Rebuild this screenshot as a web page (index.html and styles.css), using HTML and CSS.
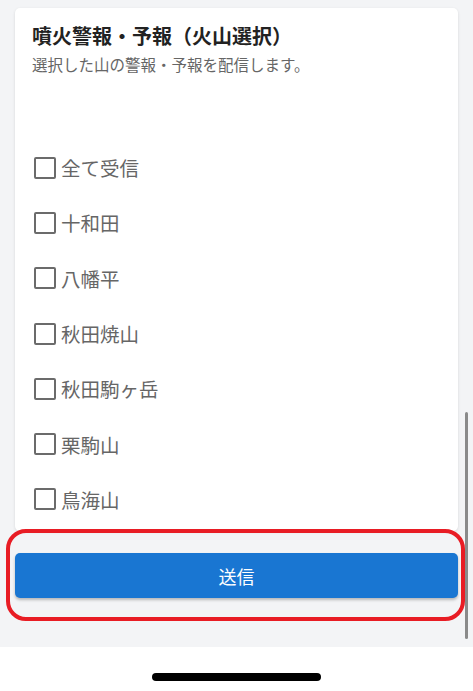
FILE: index.html
```html
<!DOCTYPE html>
<html lang="ja">
<head>
<meta charset="utf-8">
<link rel="stylesheet" href="styles.css">
</head>
<body>
<div class="screen">
  <div class="card">
    <h1 class="title">噴火警報・予報（火山選択）</h1>
    <p class="subtitle">選択した山の警報・予報を配信します。</p>
    <ul class="list">
      <li class="row"><span class="box"></span><span class="label">全て受信</span></li>
      <li class="row"><span class="box"></span><span class="label">十和田</span></li>
      <li class="row"><span class="box"></span><span class="label">八幡平</span></li>
      <li class="row"><span class="box"></span><span class="label">秋田焼山</span></li>
      <li class="row"><span class="box"></span><span class="label">秋田駒ヶ岳</span></li>
      <li class="row"><span class="box"></span><span class="label">栗駒山</span></li>
      <li class="row"><span class="box"></span><span class="label">鳥海山</span></li>
    </ul>
  </div>
  <div class="actions">
    <button class="submit">送信</button>
  </div>
  <div class="highlight"></div>
  <div class="scrollbar"></div>
</div>
<div class="home"><div class="home-bar"></div></div>
</body>
</html>
```

FILE: styles.css
```css
* { box-sizing: border-box; }
html, body { margin: 0; padding: 0; background: #ffffff; }
body {
  font-family: "Noto Sans CJK JP", "Noto Sans", sans-serif;
  width: 473px;
  height: 691px;
  overflow: hidden;
}
.screen {
  position: relative;
  height: 647px;
  background: #f3f4f6;
  padding: 8px 15px 0 15px;
}
.card {
  background: #ffffff;
  border-radius: 5px;
  box-shadow: 0 1px 3px rgba(0,0,0,0.12);
  padding: 14px 17px 3px 17px;
  height: 523px;
}
.title {
  margin: 0;
  font-size: 20px;
  line-height: 28px;
  font-weight: 700;
  color: #222222;
}
.subtitle {
  margin: 4px 0 0 0;
  font-size: 15.5px;
  line-height: 20px;
  color: #666666;
}
.list {
  list-style: none;
  margin: 66px 0 0 0;
  padding: 0;
}
.row {
  height: 55.3px;
  display: flex;
  align-items: center;
}
.box {
  width: 22px;
  height: 22px;
  margin-left: 2px;
  border: 2.5px solid #6b6b6b;
  border-radius: 2px;
  flex: none;
}
.label {
  margin-left: 5px;
  font-size: 19.5px;
  color: #666666;
}
.actions {
  padding-top: 22px;
}
.submit {
  display: block;
  width: 100%;
  height: 45px;
  border: none;
  border-radius: 5px;
  background: #1976d2;
  color: #ffffff;
  font-family: inherit;
  font-size: 18px;
  box-shadow: 0 2px 3px rgba(0,0,0,0.25);
}
.highlight {
  position: absolute;
  left: 6px;
  top: 529px;
  width: 459px;
  height: 92px;
  border: 4px solid #e81c24;
  border-radius: 20px;
}
.scrollbar {
  position: absolute;
  left: 465px;
  top: 412px;
  width: 3px;
  height: 227px;
  border-radius: 2px;
  background: #8a8a8a;
}
.home {
  height: 44px;
  padding-top: 26px;
}
.home-bar {
  width: 169px;
  height: 8px;
  margin: 0 auto;
  background: #000000;
  border-radius: 4px;
}
```
